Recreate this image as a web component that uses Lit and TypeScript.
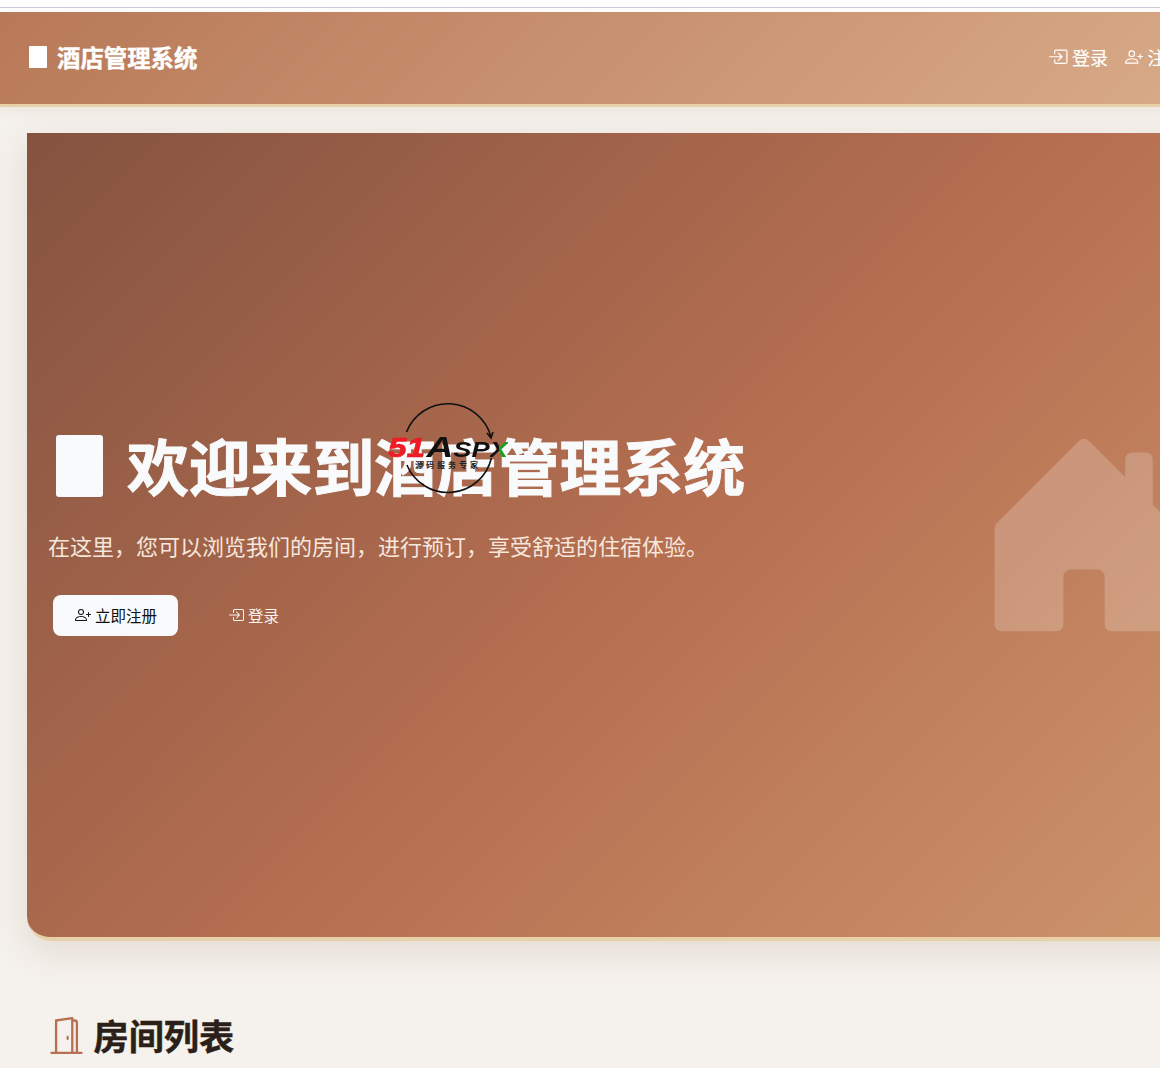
import { LitElement, html, css, svg } from "lit";
import { customElement } from "lit/decorators.js";

const personPlus = svg`<path d="M6 8a3 3 0 1 0 0-6 3 3 0 0 0 0 6m2-3a2 2 0 1 1-4 0 2 2 0 0 1 4 0m4 8c0 1-1 1-1 1H1s-1 0-1-1 1-4 6-4 6 3 6 4m-1-.004c-.001-.246-.154-.986-.832-1.664C9.516 10.68 8.289 10 6 10s-3.516.68-4.168 1.332c-.678.678-.83 1.418-.832 1.664z"/><path fill-rule="evenodd" d="M13.5 5a.5.5 0 0 1 .5.5V7h1.5a.5.5 0 0 1 0 1H14v1.5a.5.5 0 0 1-1 0V8h-1.5a.5.5 0 0 1 0-1H13V5.5a.5.5 0 0 1 .5-.5"/>`;
const login = svg`<path fill-rule="evenodd" d="M6 3.5a.5.5 0 0 1 .5-.5h8a.5.5 0 0 1 .5.5v9a.5.5 0 0 1-.5.5h-8a.5.5 0 0 1-.5-.5v-2a.5.5 0 0 0-1 0v2A1.5 1.5 0 0 0 6.5 14h8a1.5 1.5 0 0 0 1.5-1.5v-9A1.5 1.5 0 0 0 14.5 2h-8A1.5 1.5 0 0 0 5 3.5v2a.5.5 0 0 0 1 0z"/><path fill-rule="evenodd" d="M11.854 8.354a.5.5 0 0 0 0-.708l-3-3a.5.5 0 1 0-.708.708L10.293 7.5H1.5a.5.5 0 0 0 0 1h8.793l-2.147 2.146a.5.5 0 0 0 .708.708z"/>`;
const door = svg`<path d="M8.5 10c-.276 0-.5-.448-.5-1s.224-1 .5-1 .5.448.5 1-.224 1-.5 1"/><path d="M10.828.122A.5.5 0 0 1 11 .5V1h.5A1.5 1.5 0 0 1 13 2.5V15h1.5a.5.5 0 0 1 0 1h-13a.5.5 0 0 1 0-1H3V1.5a.5.5 0 0 1 .43-.495l7-1a.5.5 0 0 1 .398.117M11.5 2H11v13h1V2.5a.5.5 0 0 0-.5-.5M4 1.934V15h6V1.077z"/>`;
const house = svg`<path d="M6.5 14.5v-3.505c0-.245.25-.495.5-.495h2c.25 0 .5.25.5.5v3.5a.5.5 0 0 0 .5.5h4a.5.5 0 0 0 .5-.5v-7a.5.5 0 0 0-.146-.354L13 5.793V2.5a.5.5 0 0 0-.5-.5h-1a.5.5 0 0 0-.5.5v1.293L8.354 1.146a.5.5 0 0 0-.708 0l-6 6A.5.5 0 0 0 1.5 7.5v7a.5.5 0 0 0 .5.5h4a.5.5 0 0 0 .5-.5"/>`;

@customElement("app-root")
export class AppRoot extends LitElement {
  static styles = css`
    :host {
      display: block;
      width: 1160px;
      height: 1068px;
      overflow: hidden;
      position: relative;
      background: #f5f1ec;
      font-family: "Noto Sans CJK SC", "Liberation Sans", sans-serif;
    }
    .chrome {
      height: 12px;
      box-sizing: border-box;
      background: #fff;
      padding-top: 7px;
    }
    .chrome-line {
      height: 1px;
      background: #c9cfdc;
    }
    .page {
      width: 1340px;
    }
    .top {
      box-sizing: border-box;
      height: 95px;
      border-bottom: 3px solid #e8d0a9;
      background: linear-gradient(135deg, #b87958 0%, #dcb08e 100%);
      display: flex;
      align-items: center;
      padding: 0 28px;
      box-shadow: 0 3px 14px rgba(139, 90, 60, 0.08);
      position: relative;
      color: #fff;
    }
    .brand {
      display: flex;
      align-items: center;
      gap: 10px;
      font-size: 23.4px;
      font-weight: 700;
      color: #fff;
      line-height: 1;
      margin-top: -1px;
      -webkit-text-stroke: 0.4px #fff;
    }
    .tofu {
      display: block;
      background: #fff;
      flex: none;
    }
    .brand .tofu {
      width: 18px;
      height: 22px;
      margin: -2px 0 0 1px;
      border-radius: 1px;
    }
    .nav {
      position: absolute;
      left: 1049.5px;
      top: 0;
      height: 92px;
      display: flex;
      align-items: center;
      gap: 17px;
      color: #fff;
      font-size: 18px;
      -webkit-text-stroke: 0.15px #fff;
    }
    .nav a {
      display: flex;
      align-items: center;
      gap: 4.5px;
      white-space: nowrap;
      margin-top: -2px;
    }
    .nav svg {
      width: 18px;
      height: 18px;
      fill: currentColor;
    }
    .nav svg.wide {
      width: 19.5px;
      height: 19.5px;
      margin-left: -1.5px;
    }
    main {
      padding: 26px 0 0 27px;
    }
    .hero {
      height: 808px;
      box-sizing: border-box;
      border-bottom: 4px solid #e8d0a9;
      border-radius: 0 0 24px 24px;
      background: linear-gradient(135deg, #845340 0%, #b66f51 50%, #d09a70 100%);
      box-shadow: 0 10px 36px rgba(120, 85, 60, 0.14);
      padding: 0 0 7px 21px;
      display: flex;
      flex-direction: column;
      justify-content: center;
      position: relative;
      color: #fff;
    }
    .hero-house {
      position: absolute;
      left: 947px;
      top: 292px;
      width: 220px;
      height: 220px;
      fill: rgba(255, 255, 255, 0.2);
    }
    h1 {
      margin: 0;
      display: flex;
      align-items: center;
      gap: 24px;
      font-size: 61.8px;
      line-height: 74px;
      font-weight: 700;
      color: #f9fafb;
      -webkit-text-stroke: 1px #f9fafb;
    }
    h1 .tofu {
      width: 47px;
      height: 62px;
      border-radius: 3px;
      margin: 4px 0 0 8px;
      background: #f9fafb;
    }
    .sub {
      margin: 27px 0 0;
      font-size: 22px;
      line-height: 34px;
      color: #f6e6dc;
      white-space: nowrap;
    }
    .actions {
      display: flex;
      align-items: center;
      margin: 33px 0 0 5px;
      gap: 17px;
    }
    .btn {
      height: 41px;
      box-sizing: border-box;
      display: flex;
      align-items: center;
      gap: 4px;
      font-size: 15.5px;
      padding: 0 21px 2px 22px;
      border-radius: 8px;
    }
    .btn svg {
      width: 16px;
      height: 16px;
      fill: currentColor;
    }
    .btn.solid {
      background: #f9fafb;
      color: #111;
    }
    .btn.ghost {
      color: #fbf3ee;
      padding: 0 16px 2px;
      margin-left: 17px;
    }
    h2 {
      margin: 68px 0 0 20.5px;
      display: flex;
      align-items: center;
      gap: 9px;
      font-size: 35.2px;
      line-height: 52px;
      font-weight: 700;
      color: #2c1f19;
      -webkit-text-stroke: 0.5px #2c1f19;
    }
    h2 svg {
      width: 37px;
      height: 37px;
      fill: #b87052;
      flex: none;
    }
    .mark {
      position: absolute;
      left: 385px;
      top: 400px;
      width: 130px;
      height: 100px;
      color: #111;
    }
    .mark svg {
      position: absolute;
      left: 0;
      top: 0;
    }
    .mark-text {
      position: absolute;
      left: 3px;
      top: 29px;
      font-family: "Liberation Sans", sans-serif;
      line-height: 36px;
      font-style: italic;
      font-weight: 700;
      white-space: nowrap;
      transform: scaleX(1.24);
      transform-origin: left center;
    }
    .mark-text b {
      color: #ee1c25;
      font-size: 27px;
      -webkit-text-stroke: 0.6px #ee1c25;
    }
    .mark-text i {
      color: #111;
      font-size: 30px;
      margin-left: 1px;
    }
    .mark-text em {
      color: #111;
      font-size: 22px;
      font-weight: 700;
      text-transform: uppercase;
    }
    .mark-text u {
      text-decoration: none;
      font-size: 22px;
      font-weight: 700;
      text-transform: uppercase;
      background: linear-gradient(90deg, #111 50%, #1aa01a 50%);
      -webkit-background-clip: text;
      background-clip: text;
      color: transparent;
    }
    .mark-sub {
      position: absolute;
      left: 30px;
      top: 59px;
      font-size: 8px;
      font-weight: 700;
      line-height: 12px;
      letter-spacing: 3px;
      white-space: nowrap;
      color: #222;
    }
  `;

  render() {
    return html`
      <div class="chrome"><div class="chrome-line"></div></div>
      <div class="page">
        <header class="top">
          <div class="brand"><span class="tofu"></span>酒店管理系统</div>
          <nav class="nav">
            <a><svg class="wide" viewBox="0 0 16 16">${login}</svg>登录</a>
            <a><svg viewBox="0 0 16 16">${personPlus}</svg>注册</a>
          </nav>
        </header>
        <main>
          <section class="hero">
            <svg class="hero-house" viewBox="0 0 16 16">${house}</svg>
            <h1><span class="tofu"></span>欢迎来到酒店管理系统</h1>
            <p class="sub">在这里，您可以浏览我们的房间，进行预订，享受舒适的住宿体验。</p>
            <div class="actions">
              <a class="btn solid"><svg viewBox="0 0 16 16">${personPlus}</svg>立即注册</a>
              <a class="btn ghost"><svg viewBox="0 0 16 16">${login}</svg>登录</a>
            </div>
          </section>
          <h2><svg viewBox="0 0 16 16">${door}</svg>房间列表</h2>
        </main>
      </div>
      <div class="mark">
        <svg width="130" height="100" viewBox="0 0 130 100" fill="none" stroke="#111" stroke-width="1.6">
          <path d="M21.5 32A44.5 44.5 0 0 1 106 37"/>
          <path d="M102 33L106 38L108 32"/>
          <path d="M106.4 58A44.5 44.5 0 0 1 21.9 65"/>
        </svg>
        <div class="mark-text"><b>51</b><i>A</i><em>sp</em><u>x</u></div>
        <div class="mark-sub">源码服务专家</div>
      </div>
    `;
  }
}
